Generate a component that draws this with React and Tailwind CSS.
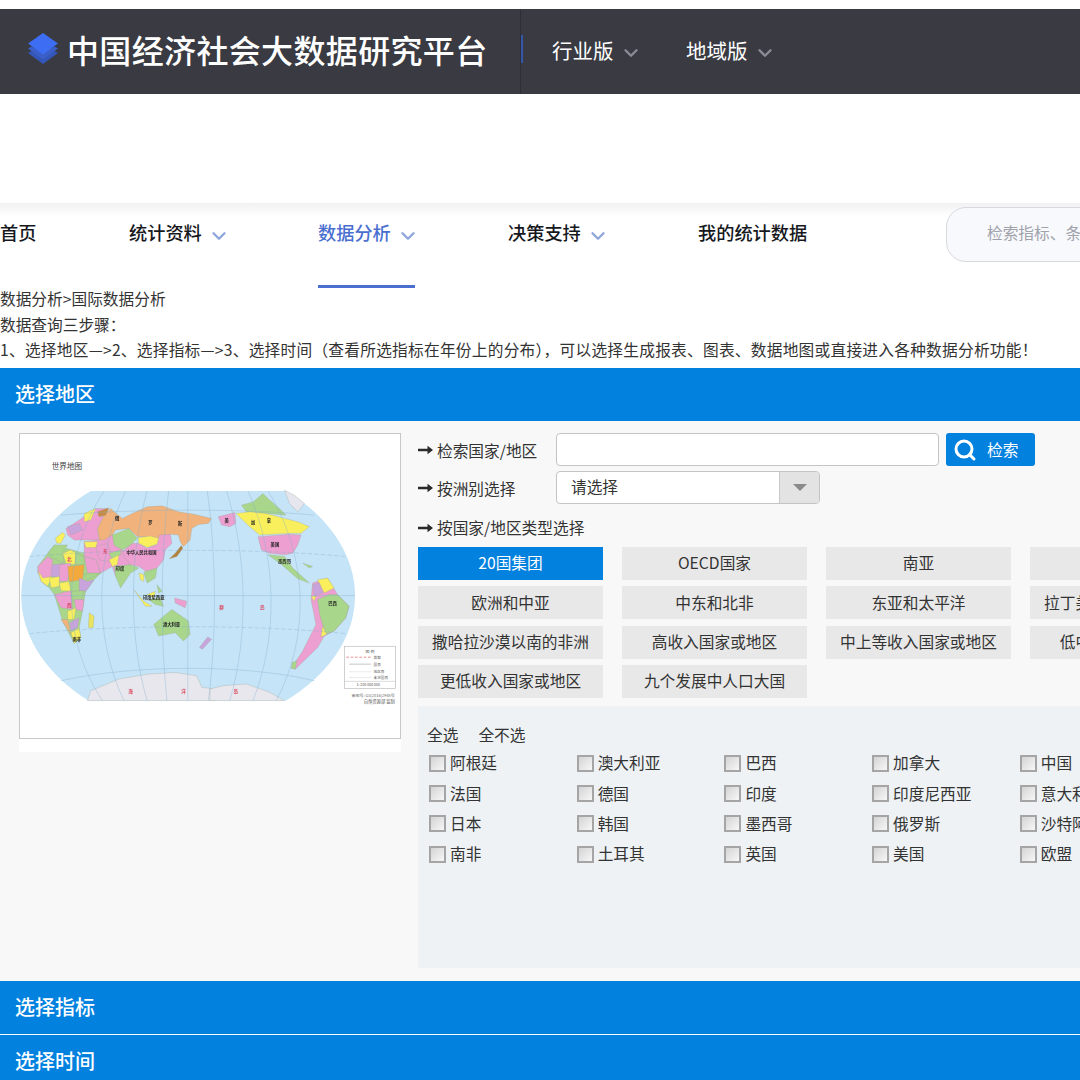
import { ChevronDown, Search } from "lucide-react";

const FONT = { fontFamily: '"Noto Sans CJK SC", "Liberation Sans", sans-serif' };

const NAV = [
  { label: "首页", width: "w-[129px]" },
  { label: "统计资料", width: "w-[189px]", menu: true },
  { label: "数据分析", width: "w-[190px]", menu: true, active: true },
  { label: "决策支持", width: "w-[190px]", menu: true },
  { label: "我的统计数据", width: "w-[248px]" },
];

const GROUPS = [
  "20国集团", "OECD国家", "南亚", "东南亚",
  "欧洲和中亚", "中东和北非", "东亚和太平洋", "拉丁美洲和加勒比地区",
  "撒哈拉沙漠以南的非洲", "高收入国家或地区", "中上等收入国家或地区", "低中收入国家地区",
  "更低收入国家或地区", "九个发展中人口大国",
];

const COUNTRIES = [
  "阿根廷", "澳大利亚", "巴西", "加拿大", "中国",
  "法国", "德国", "印度", "印度尼西亚", "意大利",
  "日本", "韩国", "墨西哥", "俄罗斯", "沙特阿拉伯",
  "南非", "土耳其", "英国", "美国", "欧盟",
];

const PINK = "#ec9fd0";
const YELLOW = "#f9ef5c";
const GREEN = "#a8d68a";
const PURPLE = "#c9a3dc";
const ORANGE = "#f2b27c";

// Eurasia, Africa and Oceania, drawn with origin at (45, 180) of the map
const WEST_LAND = [
  // outlines first, so the countries on top leave no sea between them
  [GREEN, "95,205 115,180 205,205 245,230 255,265 235,285 210,320 205,345 200,380 190,430 195,460 175,478 140,410 115,330 100,310 75,290 65,245"],
  [PINK, "205,170 250,165 290,150 320,195 345,240 297,245 300,275 290,245 255,265 240,225 205,215"],
  [ORANGE, "250,165 245,130 262,95 285,70 320,100 350,85 395,65 440,62 490,80 540,88 590,100 580,115 550,118 530,130 525,165 505,185 495,170 490,150 470,148 445,150 430,160 405,155 365,155 340,130 300,135 290,150 265,165"],
  [PINK, "320,200 350,175 370,175 395,190 425,178 432,150 465,148 470,175 450,195 445,225 425,250 395,262 370,245 345,240 325,215"],
  [YELLOW, "368,158 405,153 430,160 425,178 395,188 370,175"],
  [GREEN, "290,150 340,130 365,160 345,180 320,195 295,180"],
  ["#b5803a", "462,222 480,205 498,182 503,190 485,215"],
  [GREEN, "297,245 345,240 370,250 345,265 315,310 300,275"],
  [YELLOW, "370,265 385,270 385,290 375,285"],
  [GREEN, "385,262 425,250 420,280 395,295"],
  [PINK, "240,185 275,175 285,205 280,230 250,225"],
  [GREEN, "280,205 315,195 315,210 290,222"],
  [YELLOW, "280,225 310,210 305,240 290,245"],
  [YELLOW, "205,170 245,170 240,188 210,188"],
  [PINK, "150,130 190,105 240,70 275,70 260,100 245,130 250,165 205,165 175,165 155,150"],
  ["#c98a3e", "245,80 280,68 270,90 250,95"],
  [PURPLE, "155,125 190,115 200,135 165,150"],
  [YELLOW, "205,85 240,70 225,105 205,110"],
  [YELLOW, "118,160 140,142 148,150 135,175 122,175"],
  [GREEN, "95,205 115,180 155,180 140,205 145,235 110,220"],
  [YELLOW, "140,205 165,195 180,205 178,240 150,235"],
  [GREEN, "178,205 205,215 205,240 180,240"],
  [PINK, "65,245 95,215 110,225 108,275 80,285 65,265"],
  [PURPLE, "108,240 145,235 150,280 105,275"],
  [PINK, "130,240 165,235 155,290 130,290"],
  ["#f3a93c", "155,245 205,240 200,290 160,292"],
  [PINK, "205,215 240,225 255,265 215,265"],
  [GREEN, "205,268 255,265 215,285"],
  [YELLOW, "65,255 75,290 95,305 108,275 80,280"],
  [YELLOW, "100,280 130,275 130,305 105,310"],
  [YELLOW, "130,295 160,290 165,320 135,318"],
  [GREEN, "160,292 195,285 190,320 165,320"],
  [PURPLE, "190,280 215,290 235,285 210,320 190,318"],
  [PINK, "115,330 165,318 170,375 135,370"],
  [GREEN, "165,320 205,318 195,350 170,350"],
  [PINK, "175,345 205,345 200,380 180,375"],
  [YELLOW, "155,380 180,370 175,405 155,405"],
  [ORANGE, "135,405 155,405 165,450"],
  [PURPLE, "160,415 190,400 185,430 165,440"],
  [YELLOW, "165,445 190,430 195,460 175,478"],
  ["#e9e35e", "220,385 235,395 232,430 218,430"],
  [GREEN, "415,420 445,395 470,375 520,410 525,450 505,470 480,445 430,455"],
  [YELLOW, "355,315 385,350 410,365 390,365"],
  [GREEN, "400,345 435,340 445,365 420,360"],
  [YELLOW, "395,330 420,320 415,340"],
  [GREEN, "425,300 440,320 430,325"],
  [PINK, "478,340 515,350 510,370 480,355"],
  [PURPLE, "553,490 578,458 590,465 562,495"],
  ["#e9e7ee", "215,650 225,620 310,585 400,570 480,565 545,575 560,610 600,615 600,650"],
];

// The Americas, drawn with origin at (630, 180) of the map
const EAST_LAND = [
  [PINK, "310,295 355,280 385,330 420,365 410,400 375,440 345,455 325,490 258,555 245,552 280,500 320,420 305,345"],
  [GREEN, "175,210 225,215 250,250 300,295 265,282 215,238"],
  [PINK, "25,95 75,82 78,115 60,125 35,120"],
  [GREEN, "95,60 130,50 160,25 175,40 215,75 230,90 170,85 110,80"],
  ["#e6e6ee", "225,15 255,30 285,55 265,80 240,55"],
  [YELLOW, "78,85 120,80 170,85 225,100 265,110 300,125 275,145 240,145 150,150 120,125"],
  [PINK, "145,155 240,148 275,150 265,180 250,205 225,210 180,205 155,195"],
  [GREEN, "280,235 310,245 300,250"],
  [YELLOW, "325,285 355,280 375,310 345,325"],
  [PURPLE, "310,300 330,295 340,325 315,335"],
  [YELLOW, "305,335 320,335 315,350"],
  [GREEN, "325,345 360,330 385,330 420,365 410,400 375,440 350,450 340,420 330,385"],
  [YELLOW, "340,425 352,450 335,458"],
  [GREEN, "248,535 262,530 258,555 245,552"],
  ["#e9e7ee", "0,650 0,615 40,605 110,600 180,625 225,650"],
];

const LAND_LABELS = [
  ["俄", 350, 285], ["罗", 450, 298], ["斯", 540, 300], ["中华人民共和国", 423, 386],
  ["印度", 358, 436], ["美国", 826, 362], ["加", 760, 298], ["拿", 808, 290],
  ["巴西", 1000, 542], ["澳大利亚", 514, 605], ["墨西哥", 855, 415], ["印度尼西亚", 460, 524],
  ["南非", 228, 650], ["美", 680, 290],
];

const RED_LABELS = [
  ["海", 390, 808], ["洋", 550, 808], ["岛", 708, 808], ["群", 665, 553], ["岛", 788, 553],
  ["北", 205, 408], ["西", 205, 548], ["东", 314, 383],
];

function WorldMap() {
  return (
    <svg viewBox="57 25 1146 918" className="block h-[306px] w-[382px] border border-[#c8c8c8] bg-white">
      <text x="152" y="132" fontSize="23" fill="#444">世界地图</text>
      <g className="blur-[0.4px]">
        <path d="M270 197 L860 197 C975 265 1068 380 1068 513 C1068 650 975 760 860 830 L262 830 C150 760 60 650 60 513 C60 380 155 265 270 197 Z" fill="#c6e4f7" />
        <g transform="translate(45 180)" strokeLinejoin="round">
          {WEST_LAND.map(([fill, points], i) => (
            <polygon key={i} points={points} fill={fill} stroke="#9aa59a" strokeWidth="1" />
          ))}
        </g>
        <g transform="translate(630 180)" strokeLinejoin="round">
          {EAST_LAND.map(([fill, points], i) => (
            <polygon key={i} points={points} fill={fill} stroke="#9aa59a" strokeWidth="1" />
          ))}
        </g>
        <g fill="none" stroke="#7fb0cf" strokeWidth="1.6" opacity="0.7">
          <path d="M60 513 H1068" />
          <path d="M85 395 C350 370 780 370 1040 395" strokeDasharray="14 6" />
          <path d="M85 628 C350 600 780 600 1040 628" strokeDasharray="14 6" />
          <path d="M180 270 C400 250 740 250 945 270" />
          <path d="M180 770 C400 720 740 720 945 770" />
          <path d="M563 197 V830" />
          <path d="M505 197 C480 400 480 640 500 830" />
          <path d="M622 197 C650 400 650 640 625 830" />
          <path d="M440 197 C385 400 385 640 440 830" />
          <path d="M680 197 C745 400 745 640 690 830" />
          <path d="M375 197 C280 400 280 640 370 830" />
          <path d="M745 197 C835 400 835 640 760 830" />
          <path d="M310 197 C180 400 180 640 305 830" />
          <path d="M805 197 C930 400 930 640 830 830" />
        </g>
        {LAND_LABELS.map(([label, x, y]) => (
          <text key={label} x={x} y={y} fontSize="13" fontWeight="700" fill="#222" textAnchor="middle">{label}</text>
        ))}
        {RED_LABELS.map(([label, x, y], i) => (
          <text key={i} x={x} y={y} fontSize="14" fontWeight="700" fill="#d9485f" textAnchor="middle">{label}</text>
        ))}
      </g>
      <rect x="1036" y="666" width="154" height="127" fill="#fff" stroke="#b9b9b9" strokeWidth="2" />
      <text x="1113" y="686" fontSize="12" fill="#555" textAnchor="middle">图 例</text>
      <path d="M1042 699 H1118" stroke="#d55" strokeWidth="2" strokeDasharray="8 5" />
      <path d="M1050 720 H1116" stroke="#aaa" strokeWidth="2" />
      <path d="M1050 743 H1116 M1050 760 H1116" stroke="#ddd" strokeWidth="2" />
      <path d="M1036 772 H1190" stroke="#ccc" strokeWidth="2" />
      <text x="1124" y="703" fontSize="11" fill="#666">首都</text>
      <text x="1124" y="726" fontSize="11" fill="#666">国界</text>
      <text x="1124" y="748" fontSize="11" fill="#666">地区界</text>
      <text x="1124" y="765" fontSize="11" fill="#666">未定国界</text>
      <text x="1108" y="787" fontSize="11" fill="#555" textAnchor="middle">1: 230 000 000</text>
      <text x="1188" y="819" fontSize="12" fill="#666" textAnchor="end">审图号: GS(2016)2945号</text>
      <text x="1188" y="838" fontSize="13" fill="#555" textAnchor="end">自然资源部 监制</text>
    </svg>
  );
}

function LayersLogo() {
  return (
    <svg viewBox="0 0 30 32" className="h-[32px] w-[30px] shrink-0">
      <path d="M0 20 L3.5 18 L15 24.5 L26.5 18 L30 20 L15 31 Z" fill="#3456b8" />
      <path d="M0 15.5 L3.5 13.5 L15 20 L26.5 13.5 L30 15.5 L15 26.5 Z" fill="#3a5fc8" />
      <path d="M15 0 L30 10.5 L15 21.5 L0 10.5 Z" fill="#3d6df2" />
    </svg>
  );
}

function ArrowGlyph() {
  return (
    <svg viewBox="0 0 15 10" className="h-[10px] w-[15px] shrink-0">
      <path d="M0 3.8 H9.5 V0.8 L15 5 L9.5 9.2 V6.2 H0 Z" fill="#2a2a2a" />
    </svg>
  );
}

function SectionBar({ title, className }) {
  return (
    <div className={`flex items-center bg-[#0281df] pb-[2px] pl-[15px] text-[20px] font-medium text-white ${className}`}>
      {title}
    </div>
  );
}

function ArrowLabel({ children, className = "" }) {
  return (
    <div className={`flex items-center gap-[4px] text-[15.7px] text-[#333] ${className}`}>
      <ArrowGlyph />
      {children}
    </div>
  );
}

function CountryBox({ name }) {
  return (
    <label className="flex h-[30.4px] w-[147.7px] shrink-0 items-center gap-[4px] pl-[11px] text-[15.7px] text-[#333]">
      <span className="block h-[17px] w-[17px] shrink-0 border-2 border-[#a5a5a5] bg-gradient-to-br from-[#d4d4d4] to-[#f7f7f7]" />
      <span className="whitespace-nowrap">{name}</span>
    </label>
  );
}

export default function App() {
  return (
    <div style={FONT} className="h-[1080px] w-[1080px] overflow-hidden bg-white pt-[9px]">
      <header className="flex h-[85px] items-center bg-[#393a42]">
        <div className="flex w-[520px] items-center gap-[9px] pb-[6px] pl-[28px]">
          <LayersLogo />
          <span className="whitespace-nowrap text-[32px] font-medium leading-none tracking-[0.35px] text-white">中国经济社会大数据研究平台</span>
        </div>
        <div className="flex h-full items-center border-l border-[#2e2f36]">
          <span className="mb-[6px] h-[28px] w-[2px] bg-[#3456a8]" />
          <div className="ml-[29px] flex w-[134px] items-center pb-[2px] text-[20.5px] text-white">
            行业版
            <ChevronDown size={22} strokeWidth={2.6} className="ml-[6px] mt-[4px] text-[#8b8d96]" />
          </div>
          <div className="flex items-center pb-[2px] text-[20.5px] text-white">
            地域版
            <ChevronDown size={22} strokeWidth={2.6} className="ml-[6px] mt-[4px] text-[#8b8d96]" />
          </div>
        </div>
      </header>

      <nav className="mt-[109px] flex h-[85px] items-start bg-gradient-to-b from-[#f1f1f3] via-white via-[16%] to-white">
        {NAV.map((item) => (
          <div key={item.label} className={`h-full shrink-0 ${item.width}`}>
            <div
              className={`flex h-full w-fit items-start pt-[16px] text-[18.2px] font-medium ${
                item.active ? "border-b-[3px] border-[#4a6fd0] text-[#4a6fd0]" : "text-[#16181d]"
              }`}
            >
              {item.label}
              {item.menu && (
                <ChevronDown size={22} strokeWidth={2.6} className="-mr-[4px] ml-[6px] mt-[6px] text-[#8ea6dc]" />
              )}
            </div>
          </div>
        ))}
        <div className="mt-[4px] flex h-[55px] w-[300px] shrink-0 items-center rounded-[20px] border border-[#d8d8de] bg-[#f8f9fd] pb-[4px] pl-[40px] text-[15.7px] text-[#a0a2aa]">
          检索指标、条目、关键词
        </div>
      </nav>

      <div className="-mt-[2px] pb-[5.5px] text-[15.7px] leading-[25.5px] text-[#333]">
        <div>数据分析&gt;国际数据分析</div>
        <div>数据查询三步骤：</div>
        <div className="whitespace-nowrap tracking-[0.25px]">1、选择地区—&gt;2、选择指标—&gt;3、选择时间（查看所选指标在年份上的分布），可以选择生成报表、图表、数据地图或直接进入各种数据分析功能！</div>
      </div>

      <SectionBar title="选择地区" className="h-[53px]" />

      <div className="flex h-[560px] gap-[17px] bg-[#f8f8f8] pl-[19px] pt-[12px]">
        <div className="w-[382px] shrink-0">
          <WorldMap />
          <div className="h-[13px] bg-white" />
        </div>

        <div className="w-[700px] shrink-0">
          <div className="flex h-[33px] items-center">
            <ArrowLabel className="w-[138px] pt-[2px]">检索国家/地区</ArrowLabel>
            <div className="h-full w-[383px] rounded-[4px] border border-[#c4c4c4] bg-white" />
            <button className="ml-[7px] flex h-full w-[89px] items-center gap-[10px] rounded-[3px] bg-[#0281df] pl-[7px] text-[15.7px] text-white">
              <Search size={24} strokeWidth={3} />
              检索
            </button>
          </div>
          <div className="mt-[5px] flex h-[33px] items-center">
            <ArrowLabel className="w-[138px] pt-[2px]">按洲别选择</ArrowLabel>
            <div className="flex h-full w-[264px] items-center overflow-hidden rounded-[4px] border border-[#c4c4c4] bg-white">
              <span className="flex-1 pb-[1px] pl-[14px] text-[15.7px] text-[#333]">请选择</span>
              <span className="flex h-full w-[40px] items-center justify-center border-l border-[#c8c8c8] bg-[#e3e3e3]">
                <span className="h-0 w-0 border-x-[7px] border-t-[7px] border-x-transparent border-t-[#8a8a8a]" />
              </span>
            </div>
          </div>
          <ArrowLabel className="h-[43px] pt-[5px]">按国家/地区类型选择</ArrowLabel>

          <div className="grid w-[800px] grid-cols-[185px_185px_185px_185px] gap-x-[19px] gap-y-[6.3px]">
            {GROUPS.map((name, i) => (
              <div
                key={name}
                className={`flex h-[33px] items-center justify-center whitespace-nowrap pb-[1px] text-[15.7px] ${
                  i === 0 ? "bg-[#0281df] text-white" : "bg-[#e8e8e8] text-[#333]"
                }`}
              >
                {name}
              </div>
            ))}
          </div>

          <div className="mt-[8px] h-[262px] w-[740px] bg-[#eef2f5] pt-[15px]">
            <div className="flex h-[27px] items-center gap-[20px] pl-[9px] text-[15.7px] text-[#333]">
              <span>全选</span>
              <span>全不选</span>
            </div>
            <div className="flex flex-wrap">
              {COUNTRIES.map((name) => (
                <CountryBox key={name} name={name} />
              ))}
            </div>
          </div>
        </div>
      </div>

      <SectionBar title="选择指标" className="h-[53px]" />
      <SectionBar title="选择时间" className="mt-px h-[53px]" />
    </div>
  );
}
